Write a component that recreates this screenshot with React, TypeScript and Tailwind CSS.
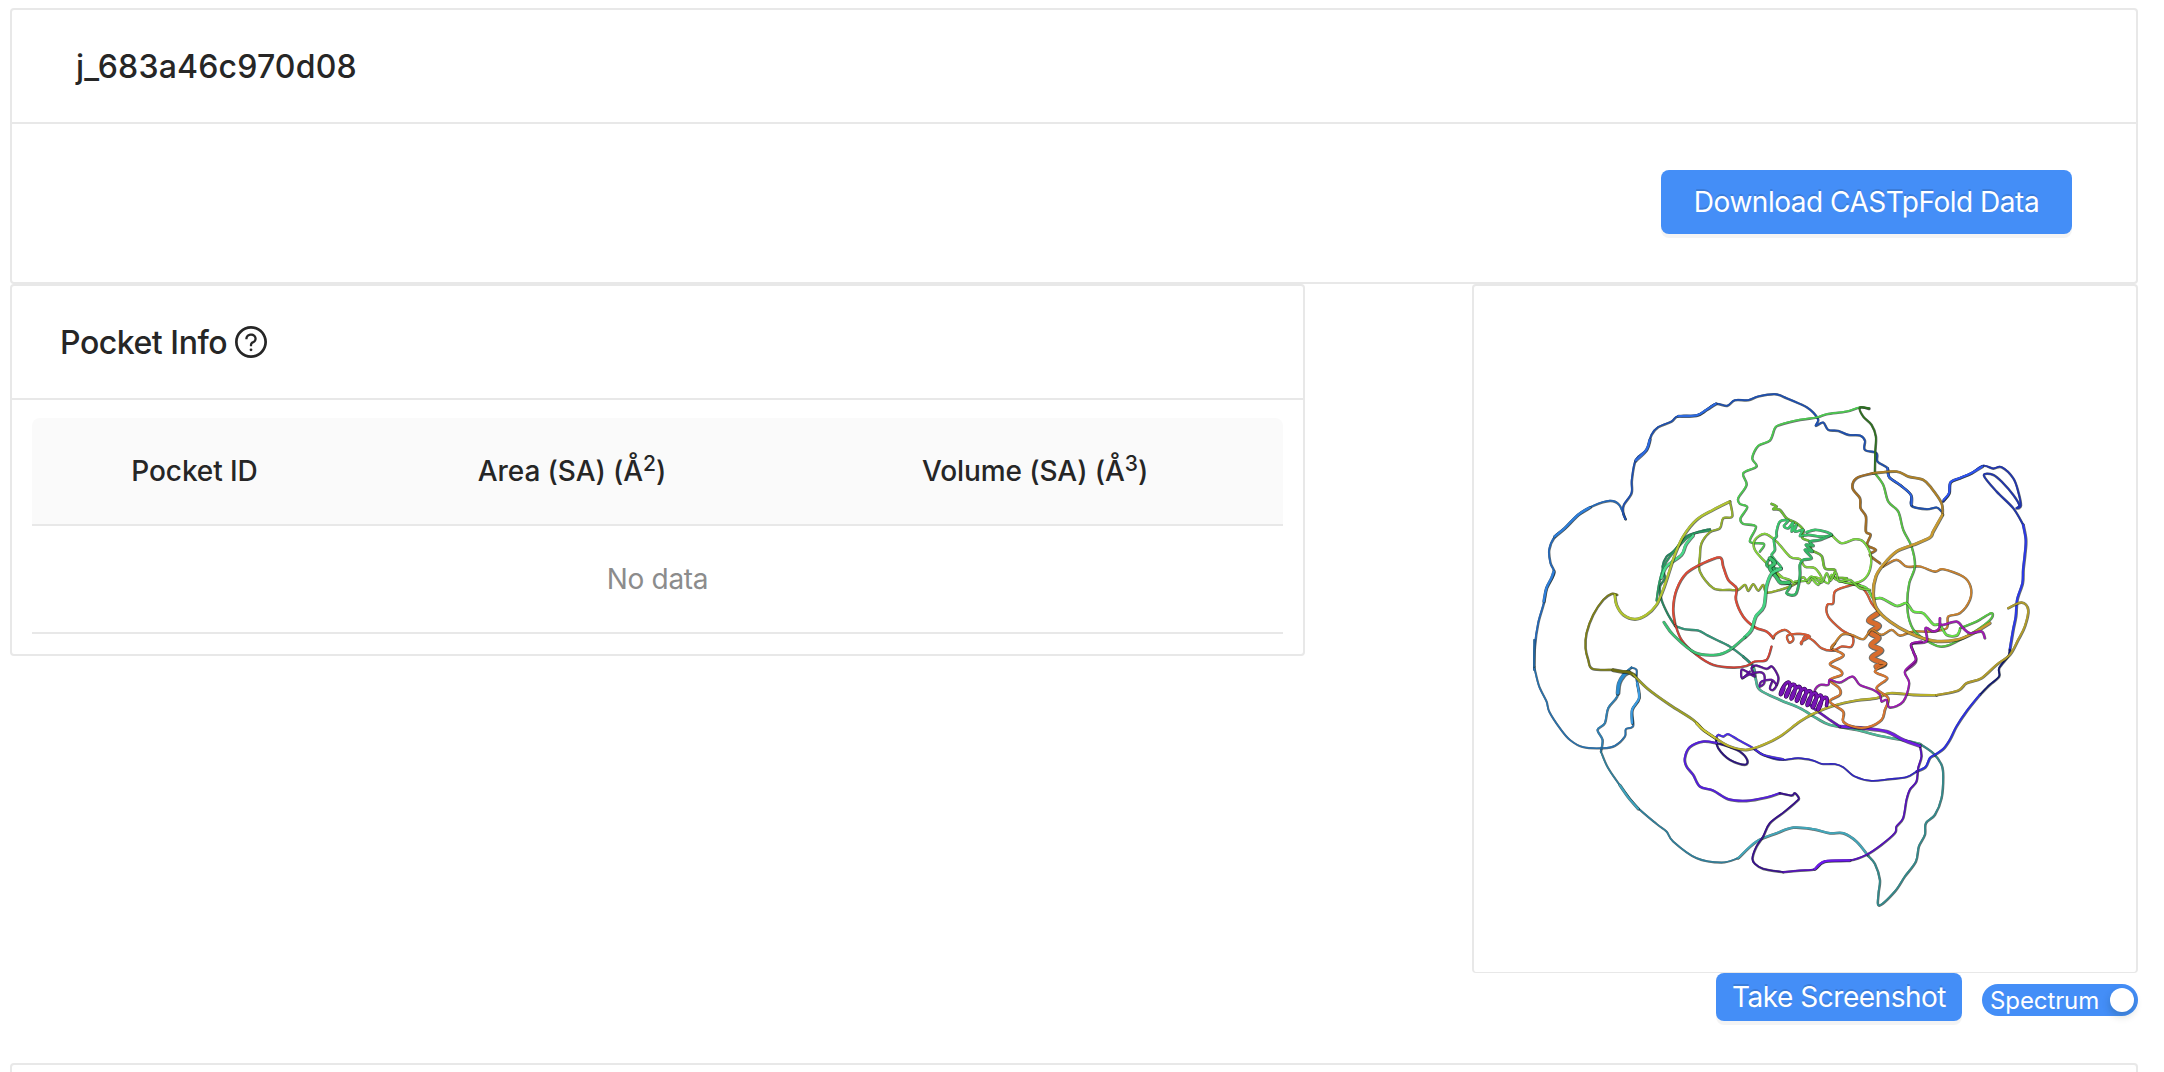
import React from "react";

type Strand = { at: [number, number]; pts: string; c: string; w?: number; ribbon?: boolean };

// Smooth curve through a list of points (Catmull-Rom converted to Béziers)
function smooth(pts: number[][]): string {
  let d = `M${pts[0][0]} ${pts[0][1]}`;
  for (let i = 0; i < pts.length - 1; i++) {
    const a = pts[Math.max(0, i - 1)];
    const b = pts[i];
    const c = pts[i + 1];
    const e = pts[Math.min(pts.length - 1, i + 2)];
    d += `C${b[0] + (c[0] - a[0]) / 6} ${b[1] + (c[1] - a[1]) / 6} ${c[0] - (e[0] - b[0]) / 6} ${c[1] - (e[1] - b[1]) / 6} ${c[0]} ${c[1]}`;
  }
  return d;
}

function parse(s: Strand): number[][] {
  return s.pts.split(" ").map((p) => {
    const [x, y] = p.split(",").map(Number);
    return [x + s.at[0], y + s.at[1]];
  });
}

// Looping ribbon between two points
function coil(x0: number, y0: number, x1: number, y1: number, turns: number, amp: number, rx: number): string {
  const out: number[][] = [];
  const len = Math.hypot(x1 - x0, y1 - y0);
  const ux = (x1 - x0) / len;
  const uy = (y1 - y0) / len;
  const n = turns * 10;
  for (let i = 0; i <= n; i++) {
    const t = i / n;
    const a = t * turns * Math.PI * 2;
    const along = t * len + Math.cos(a) * rx;
    const off = Math.sin(a) * amp;
    out.push([x0 + ux * along - uy * off, y0 + uy * along + ux * off]);
  }
  return smooth(out);
}

const TL: [number, number] = [0, 0];
const TR: [number, number] = [840, 0];
const BL: [number, number] = [0, 810];
const BR: [number, number] = [840, 810];
const CORE: [number, number] = [780, 360];
const COIL: [number, number] = [705, 795];

const strands: Strand[] = [
  // teal to cyan chain
  { at: BL, c: "#2f7fb4", w: 8, pts: "395,83 375,100 358,130 352,170 325,205 315,250 293,270 308,300 303,335" },
  { at: BL, c: "#2b8ccf", w: 15, pts: "386,97 372,106 358,130 354,160" },
  { at: BL, c: "#2f7f9c", w: 7, pts: "303,335 325,385 370,450 410,500 470,552 500,575 520,605 590,655 665,668 715,655" },
  { at: BL, c: "#3ea3bd", w: 10, pts: "360,436 385,472 415,507" },
  { at: BL, c: "#41a6ba", w: 9, pts: "715,655 770,605 830,580 880,563 940,568 990,580 1030,580 1070,605 1105,648" },
  { at: BR, c: "#33898b", w: 8, pts: "265,648 285,672 300,720 296,760 298,797 345,755 375,710 408,665 417,620 435,585 438,550 465,525 485,475 490,410 485,375 460,340 420,312" },
  { at: BR, c: "#4cb797", w: 9, pts: "420,312 380,303 300,288 230,270 150,255 110,235 60,205 0,180 -60,150 -72,120 -80,80 -110,50" },
  { at: BL, c: "#32967a", w: 8, pts: "760,80 730,50 690,20 650,0 620,-15 595,-28 555,-32 525,-42" },
  { at: TL, c: "#288560", w: 8, pts: "527,770 505,735 485,690 480,650 495,625 488,590 500,560 520,545 560,500 600,485 630,478" },
  { at: TL, c: "#2a9a62", w: 8, pts: "632,482 580,492 545,520 510,560 492,590 478,640 470,692" },
  { at: TL, c: "#48d98a", w: 11, pts: "580,497 558,525 545,555 500,590 485,625" },

  // outer blue chain
  { at: TL, c: "#2467b8", w: 8, pts: "377,448 358,405 330,393 280,408 235,435 195,475 165,500 148,540 152,580 163,610 140,655 132,700 115,760 105,830 103,900" },
  { at: TL, c: "#2f7fdb", w: 11, pts: "270,413 235,435 195,475 165,500" },
  { at: TL, c: "#2f7fdb", w: 11, pts: "162,605 155,625 140,655 132,695" },
  { at: BL, c: "#2870ad", w: 7, pts: "103,80 105,90 118,140 140,185 148,215 180,265 210,300 250,322 310,325 345,318 375,290 378,268 400,258 397,210 418,175 410,120 410,90 395,83" },
  { at: BL, c: "#276fad", w: 7, pts: "103,80 103,0" },
  { at: BL, c: "#3c9be0", w: 10, pts: "397,250 397,210 418,175 412,130" },
  { at: TL, c: "#1e4fae", w: 8, pts: "377,448 370,430 372,405 395,370 396,330 408,270 440,240 455,195 475,172 515,155 535,139 590,137 620,120 648,102 682,108 705,91 745,91 775,80 825,73 860,85 900,102 920,112 940,128 955,150 948,168 970,158 985,180 1015,183 1045,195 1080,197 1095,212 1095,240 1130,250 1133,275 1163,295 1168,322 1200,345 1233,375 1235,408 1280,418 1310,413 1325,425" },
  { at: TL, c: "#2e6ae0", w: 11, pts: "408,272 440,240 450,210" },
  { at: TL, c: "#2e6ae0", w: 10, pts: "535,139 590,137 620,120 648,102" },
  { at: TL, c: "#2e62e0", w: 9, pts: "1163,295 1168,322 1200,345 1233,375 1235,405" },
  { at: TR, c: "#2034ad", w: 8, pts: "490,395 508,370 512,338 540,325 575,310 610,288 640,296 665,292 700,325 715,365 723,408 710,415 718,405 700,375 670,340 640,315 612,317 650,365 700,415 730,465" },
  { at: TR, c: "#2f55ef", w: 10, pts: "492,390 508,370 512,338 540,325 575,310 608,290" },
  { at: TR, c: "#2c39e3", w: 10, pts: "730,465 738,510 735,555 730,600 728,640 712,690 708,740 700,780 690,840" },
  { at: BR, c: "#121a70", w: 8, pts: "690,30 685,50 658,85 658,110 630,135 600,165" },
  { at: BR, c: "#2d30dc", w: 9, pts: "600,165 560,215 530,260 510,300 490,328 465,345 450,355 437,382 410,395" },
  { at: BR, c: "#3024c4", w: 7, pts: "410,395 380,412 330,418 275,423 225,410 190,382 165,373 125,372 100,362 55,355 0,360 -50,345 -80,325" },
  { at: BL, c: "#4a2ae8", w: 8, pts: "850,358 790,345 760,325 715,300 685,283 670,290 655,285 648,295" },
  { at: BL, c: "#2c137e", w: 8, pts: "648,295 655,325 690,360 735,375 742,360 720,335 685,320 650,310" },
  { at: BL, c: "#541edb", w: 9, pts: "650,310 610,305 570,322 555,355 560,380 580,405 600,440 640,452 685,478 740,483 800,473 840,460" },
  { at: BL, c: "#370f8c", w: 8, pts: "840,460 875,467 885,460 897,475 890,485 855,515 810,550 790,590 770,620 758,655 765,672 790,687 850,697" },
  { at: BR, c: "#5512b8", w: 8, pts: "10,697 60,692 105,688 135,665 210,662 260,645 305,615 345,580 350,560 370,535 380,480 390,450 410,425 415,385 425,350 420,318" },
  { at: BR, c: "#6c1aec", w: 10, pts: "105,688 135,665 210,662" },
  { at: BR, c: "#701de0", w: 12, pts: "420,318 370,300 320,275 250,265 180,260" },
  { at: BR, c: "#6715b8", w: 9, pts: "180,260 150,240 110,212 90,195" },

  // olive chain
  { at: TL, c: "#7d7e18", w: 8, pts: "352,675 335,672 310,690 280,735 260,790 257,835 265,870 278,897 340,900" },
  { at: BL, c: "#6b6b12", w: 13, pts: "340,91 365,95 388,98 405,108" },
  { at: BL, c: "#9da025", w: 9, pts: "400,104 445,148 510,195 580,240 610,270 650,297" },
  { at: BL, c: "#cbc733", w: 10, pts: "590,250 610,270 650,297" },
  { at: BL, c: "#b7af2b", w: 9, pts: "650,297 690,320 740,330 790,315 840,290 900,245 940,222 1000,198 1070,182 1130,175 1170,160 1240,165 1310,166" },
  { at: BR, c: "#b09b2b", w: 9, pts: "470,166 535,152 560,130 605,115 650,75 690,45 715,0 735,-40 745,-90 725,-112 685,-95" },
  { at: TL, c: "#b2c430", w: 10, pts: "345,675 350,705 370,735 405,748 440,735 470,705 490,660 510,600 525,555 550,500 590,450 640,420 690,395" },
  { at: TL, c: "#96b02c", w: 8, pts: "690,395 697,440 670,445 660,475 630,487 605,520 600,560 600,605 640,655 690,660 715,660 735,645 745,663 760,643 775,662 790,645 800,668 840,660 870,650 890,640" },

  // red to orange chain
  { at: TL, c: "#d24034", w: 8, pts: "815,830 800,870 765,875 740,888 700,893 640,885 590,855 545,810 525,760" },
  { at: TL, c: "#dc4a36", w: 9, pts: "525,760 520,715 530,660 560,610 610,580 660,563 670,590 685,630 710,655 708,690 730,740 765,772 800,785 820,805" },
  { at: TL, c: "#d95832", w: 8, pts: "820,805 828,792 855,780 875,795 880,810 868,818 863,797 900,792 930,800 905,815 905,822 915,800 940,812 965,835 1000,842 1025,830 1055,830 1058,800 1025,780 985,740 982,705 1000,700 1005,665 1040,650 1075,643 1100,670 1115,700 1135,725" },
  { at: TR, c: "#d86c2d", w: 20, ribbon: true, pts: "292,732 267,752 297,768 271,788 296,804 274,826 304,842 276,864 312,882 290,890" },
  { at: BR, c: "#d8762f", w: 9, pts: "300,70 318,72 285,95 322,115 290,145 325,175 315,210 305,240 265,262 225,262 190,245 190,215 150,185 180,165 178,145 150,120 185,105 180,90 150,72 188,50 185,40 155,25 165,10" },
  { at: TR, c: "#c9812e", w: 8, pts: "165,820 155,835 185,795 215,795 250,808 275,780 305,795 335,780 360,797 400,785 450,785 500,775 505,740 540,730 570,690 572,650 550,620 490,598 465,605 420,590 380,590 350,570 310,590" },
  { at: TR, c: "#a36d23", w: 9, pts: "300,580 270,555 288,540 262,525 272,495 258,485 258,440 242,415 240,385 218,355 230,325 280,310" },

  // bright green chain
  { at: TR, c: "#4cc850", w: 8, pts: "268,115 240,113 200,125 140,133 110,143 60,150 0,165 -15,175 -30,212 -65,228 -83,265 -70,290 -110,310 -100,345 -125,385 -120,402 -98,412 -118,445 -110,462 -72,470 -90,515 -48,522 -60,545" },
  { at: TR, c: "#2f7020", w: 8, pts: "268,117 240,113 250,140 275,165 288,200 286,250 285,310" },
  { at: TR, c: "#56c442", w: 8, pts: "285,310 310,345 325,395 355,425 370,480 395,530 405,590 388,640 382,700 388,750 410,790 480,830 540,810 600,775 635,745 633,730 590,755 540,775" },
  { at: TR, c: "#68e046", w: 9, pts: "540,780 530,797 500,795 480,765 460,763 430,730 400,725 380,700 350,708 305,685 280,685 260,655 215,640" },

  // core cluster
  { at: CORE, c: "#6fbc32", w: 9, pts: "35,42 50,50 40,58 60,60 80,85 110,100 130,120 128,145 150,155 155,180 185,198 195,235 225,240 222,262 260,265 250,275 290,285" },
  { at: CORE, c: "#86d33a", w: 8, pts: "65,260 20,220 -15,180 -15,150 15,132 50,155 90,200 120,208 135,230 165,235 185,265 160,262 145,280 130,262 105,280 90,270 60,260 30,240" },
  { at: CORE, c: "#7cd840", w: 8, pts: "215,135 245,160 285,148 310,155 332,195 330,240 310,270 275,280 230,270 215,255 205,280 185,270 175,285 155,265" },
  { at: CORE, c: "#76d03f", w: 8, pts: "105,275 140,272 155,260 185,278 200,250 212,272 228,248 238,275 270,270 300,295 330,300" },
  { at: CORE, c: "#39c56c", w: 9, pts: "40,235 65,235 45,210 35,195 45,180 42,150 50,140 50,125 60,95 85,92 72,108 85,115 100,98 95,125 110,105 105,125 130,120 120,138 145,135 185,140 215,135 195,125 165,120 140,127" },
  { at: CORE, c: "#35b465", w: 10, pts: "215,135 180,150 150,155 160,168 138,165 158,185 135,180 155,205 130,210 120,225 120,260 108,312 80,310 92,285 60,275 45,250 35,205 20,225 40,240" },
  { at: CORE, c: "#3bc06c", w: 14, pts: "30,205 45,220 30,235 50,262 62,278 88,278" },
  { at: TL, c: "#44d483", w: 12, pts: "843,597 815,612 800,650 792,710 768,740 755,780 735,802" },
  { at: TL, c: "#3bc374", w: 10, pts: "735,802 690,840 650,855 585,848 520,795 492,757" },

  // brown and gold ribbon
  { at: TR, c: "#ae8026", w: 9, pts: "280,310 350,305 385,320 430,330 455,355 485,400 488,435" },
  { at: TR, c: "#c99b30", w: 11, pts: "488,435 460,485 450,503 400,525 350,545 310,585 288,620 280,670 290,715 330,755 390,790 460,813 530,810 580,790 630,760" },

  // violet tail
  { at: TR, c: "#a118b4", w: 9, pts: "615,805 605,785 570,790 550,775 530,755 485,765 480,745 478,775 460,785 437,775 440,815 395,822 400,845 408,875 380,900" },
  { at: BR, c: "#9c18b0", w: 8, pts: "425,5 395,12 400,35 408,60 375,95 388,130 370,185 330,203 320,180 305,185 300,165 280,150 240,135 218,110 180,128 150,120 145,135 120,135 105,150 105,170" },
  { at: COIL, c: "#5c1098", w: 8, pts: "45,110 22,130 20,105 35,110 60,125 50,100 65,92 95,102 112,95 130,125 128,145 115,165 105,160 112,140" },
  { at: COIL, c: "#6412a0", w: 8, pts: "22,130 45,118 75,112 88,120 88,145 75,155 80,140 110,135 125,150" },
];

const violetHelix = coil(846, 952, 974, 1004, 8, 22, 6);

function ProteinView() {
  return (
    <svg className="block h-full w-full" viewBox="-78 -252 1986 2058" fill="none" strokeLinecap="round">
      {strands.map((s, i) => {
        const d = smooth(parse(s));
        const w = s.w ?? 8;
        const join = s.ribbon ? "bevel" : "round";
        return (
          <g key={i} strokeLinejoin={join}>
            <path d={d} stroke="#0b1512" strokeOpacity={0.62} strokeWidth={w - 0.7} />
            <path d={d} stroke={s.c} strokeWidth={w * 0.66} transform="translate(-0.8 -0.8)" />
          </g>
        );
      })}
      <path d={violetHelix} stroke="#2a0545" strokeWidth={11} />
      <path d={violetHelix} stroke="#7613b4" strokeWidth={7.5} />
    </svg>
  );
}

function HelpIcon() {
  return (
    <svg className="h-8 w-8" viewBox="64 64 896 896" fill="currentColor">
      <path d="M512 64C264.6 64 64 264.6 64 512s200.600 448 448 448 448-200.600 448-448S759.400 64 512 64zm0 820c-205.400 0-372-166.600-372-372s166.600-372 372-372 372 166.600 372 372-166.600 372-372 372z" />
      <path d="M623.600 316.700C593.600 290.400 554 276 512 276s-81.600 14.500-111.600 40.700C369.200 344 352 380.700 352 420v7.600c0 4.400 3.600 8 8 8h48c4.400 0 8-3.600 8-8V420c0-44.100 43.100-80 96-80s96 35.900 96 80c0 31.100-22 59.600-56.100 72.700-21.200 8.100-39.200 22.300-52.100 40.900-13.100 19-19.900 41.800-19.900 64.900V620c0 4.400 3.600 8 8 8h48c4.400 0 8-3.600 8-8v-22.700a48.300 48.300 0 0 1 30.900-44.800c59-22.700 97.100-74.700 97.100-132.500.1-39.300-17.100-76-48.300-103.300zM472 732a40 40 0 1 0 80 0 40 40 0 1 0-80 0z" />
    </svg>
  );
}

const buttonClass =
  "flex items-center justify-center rounded-lg bg-[#448ef7] text-[28px] tracking-[-0.48px] text-white shadow-[0_4px_0_rgba(0,0,0,0.045)] [text-shadow:0_-2px_0_rgba(0,0,0,0.12)]";

const headCell = "border-b-2 border-[#e8e8e8] bg-[#fafafa] p-0 font-medium";

export default function App() {
  return (
    <div className="h-[1072px] overflow-hidden bg-white pt-2 pr-[26px] pl-[10px] font-['Inter',sans-serif] text-[#262626]">
      <section className="h-[276px] rounded-[4px] border-2 border-[#e8e8e8]">
        <header className="flex h-[114px] items-center border-b-2 border-[#e8e8e8] px-16 pt-0.5">
          <h1 className="text-[32px] leading-none font-medium tracking-[0.18px]">j_683a46c970d08</h1>
        </header>
        <div className="flex justify-end px-16 pt-[46px]">
          <button className={`${buttonClass} h-16 w-[411px]`}>Download CASTpFold Data</button>
        </div>
      </section>

      <div className="flex items-start justify-between">
        <section className="h-[372px] w-[1295px] rounded-[4px] border-2 border-[#e8e8e8]">
          <header className="flex h-[114px] items-center gap-2 border-b-2 border-[#e8e8e8] px-12">
            <h2 className="pt-0.5 text-[32px] leading-none font-medium tracking-[-0.45px]">Pocket Info</h2>
            <HelpIcon />
          </header>
          <div className="px-5 pt-[18px]">
            <table className="w-[1251px] table-fixed border-separate border-spacing-0 text-[28px] tracking-[-0.08px]">
              <colgroup>
                <col className="w-[325px]" />
                <col className="w-[430px]" />
                <col />
              </colgroup>
              <thead>
                <tr className="h-[108px]">
                  <th className={`${headCell} rounded-tl-lg`}>Pocket ID</th>
                  <th className={headCell}>
                    Area (SA) (Å<sup>2</sup>)
                  </th>
                  <th className={`${headCell} rounded-tr-lg`}>
                    Volume (SA) (Å<sup>3</sup>)
                  </th>
                </tr>
              </thead>
              <tbody>
                <tr className="h-[108px]">
                  <td colSpan={3} className="border-b-2 border-[#e8e8e8] p-0 text-center tracking-[-0.3px] text-[#8c8c8c]">
                    No data
                  </td>
                </tr>
              </tbody>
            </table>
          </div>
        </section>

        <div className="flex w-[666px] flex-col">
          <section className="h-[689px] rounded-[4px] border-2 border-b border-[#e8e8e8]">
            <ProteinView />
          </section>
          <div className="flex items-start justify-end gap-5">
            <button className={`${buttonClass} h-12 w-[246px]`}>Take Screenshot</button>
            <button className="mt-[11px] flex h-8 w-[156px] items-center justify-between rounded-full bg-[#448ef7] pr-1 pl-2 text-[24px] tracking-[-0.1px] text-white">
              <span className="pt-0.5 leading-none">Spectrum</span>
              <span className="h-6 w-6 rounded-full bg-white shadow-[0_4px_8px_rgba(0,35,11,0.2)]" />
            </button>
          </div>
        </div>
      </div>

      <section className="mt-[42px] h-20 rounded-[4px] border-2 border-[#e8e8e8]" />
    </div>
  );
}
